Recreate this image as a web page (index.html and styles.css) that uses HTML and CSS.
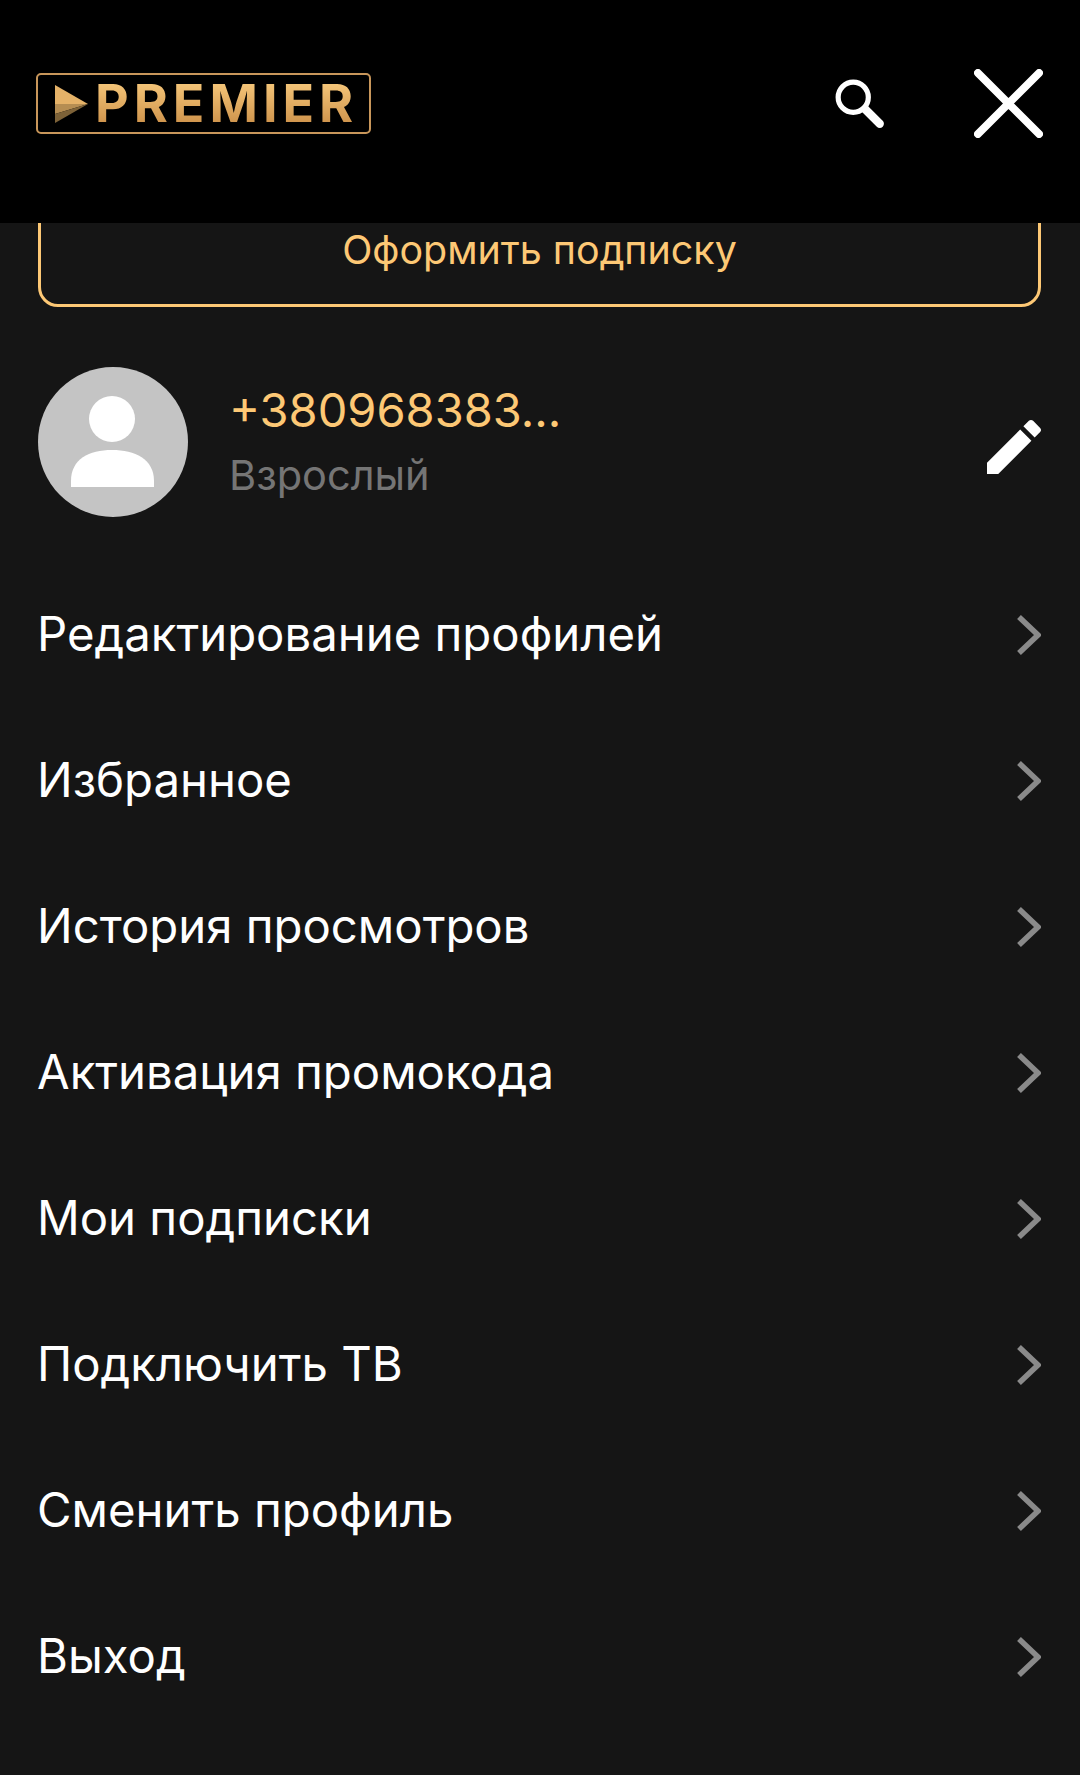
FILE: index.html
```html
<!DOCTYPE html>
<html lang="ru">
<head>
<meta charset="UTF-8">
<meta name="viewport" content="width=device-width, initial-scale=1.0">
<title>Premier</title>
<link rel="stylesheet" href="styles.css">
</head>
<body>

<!-- Top bar -->
<header class="top-bar">
  <div class="logo">
    <svg class="logo-play" viewBox="0 0 33 38">
      <polygon points="0,0 33,19 0,19" fill="#e5b268"/>
      <polygon points="0,19 33,19 0,29" fill="#b58d52"/>
      <polygon points="0,29 33,19 0,38" fill="#7d6238"/>
    </svg>
    <span class="logo-text">PREMIER</span>
  </div>
  <svg class="search-icon" viewBox="0 0 50 50">
    <circle cx="18.5" cy="18.5" r="14.5" fill="none" stroke="#fff" stroke-width="5"/>
    <line x1="30" y1="30" x2="44" y2="44" stroke="#fff" stroke-width="8" stroke-linecap="round"/>
  </svg>
  <svg class="close-icon" viewBox="0 0 70 70">
    <path d="M4 4L66 66M66 4L4 66" fill="none" stroke="#fff" stroke-width="8" stroke-linecap="round"/>
  </svg>
</header>

<main class="menu-page">
  <button class="subscribe-button">Оформить подписку</button>

  <section class="profile">
    <div class="avatar">
      <svg viewBox="0 0 150 150">
        <circle cx="74" cy="52" r="23" fill="#fff"/>
        <path d="M33 120V114C33 92 51 83 74 83S116 92 116 114V120Z" fill="#fff"/>
      </svg>
    </div>
    <div class="profile-info">
      <div class="profile-name">+380968383...</div>
      <div class="profile-type">Взрослый</div>
    </div>
    <svg class="edit-icon" viewBox="0 0 24 24">
      <path fill="#fff" d="M3 17.25V21h3.75L17.81 9.94l-3.75-3.75L3 17.25zM20.71 7.04c.39-.39.39-1.02 0-1.41l-2.34-2.34c-.39-.39-1.02-.39-1.41 0l-1.83 1.83 3.75 3.75 1.83-1.83z"/>
    </svg>
  </section>

  <nav class="menu-list">
    <a class="menu-row">Редактирование профилей<svg class="chevron" viewBox="0 0 24 40"><path d="M2 2L21 20L2 38"/></svg></a>
    <a class="menu-row">Избранное<svg class="chevron" viewBox="0 0 24 40"><path d="M2 2L21 20L2 38"/></svg></a>
    <a class="menu-row">История просмотров<svg class="chevron" viewBox="0 0 24 40"><path d="M2 2L21 20L2 38"/></svg></a>
    <a class="menu-row">Активация промокода<svg class="chevron" viewBox="0 0 24 40"><path d="M2 2L21 20L2 38"/></svg></a>
    <a class="menu-row">Мои подписки<svg class="chevron" viewBox="0 0 24 40"><path d="M2 2L21 20L2 38"/></svg></a>
    <a class="menu-row">Подключить ТВ<svg class="chevron" viewBox="0 0 24 40"><path d="M2 2L21 20L2 38"/></svg></a>
    <a class="menu-row">Сменить профиль<svg class="chevron" viewBox="0 0 24 40"><path d="M2 2L21 20L2 38"/></svg></a>
    <a class="menu-row">Выход<svg class="chevron" viewBox="0 0 24 40"><path d="M2 2L21 20L2 38"/></svg></a>
  </nav>
</main>

</body>
</html>
```

FILE: styles.css
```css
* {
  box-sizing: border-box;
}

body {
  margin: 0;
  height: 1775px;
  overflow: hidden;
  background: #151515;
  color: #fff;
  font-family: "Inter", "Noto Sans", sans-serif;
}

/* Top bar */
.top-bar {
  position: relative;
  z-index: 1;
  display: flex;
  align-items: center;
  height: 223px;
  padding: 0 37px 16px 36px;
  background: #000;
}

.logo {
  display: flex;
  align-items: center;
  gap: 7px;
  width: 335px;
  height: 61px;
  padding-left: 17px;
  border: 2px solid #c8965a;
  border-radius: 5px;
}

.logo-play {
  width: 33px;
  height: 38px;
}

.logo-text {
  font-size: 52px;
  font-weight: 700;
  letter-spacing: 5px;
  line-height: 1;
  background: linear-gradient(#f9cb7e, #c98c45);
  -webkit-background-clip: text;
  background-clip: text;
  color: transparent;
}

.search-icon {
  width: 52px;
  height: 52px;
  margin-left: auto;
  margin-right: 88px;
}

.close-icon {
  width: 69px;
  height: 69px;
}

/* Scrolled content under the bar */
.menu-page {
  padding: 0 39px 0 38px;
}

.subscribe-button {
  display: block;
  width: 100%;
  height: 121px;
  margin-top: -37px;
  padding: 6px 0 0;
  background: none;
  border: 3px solid #fdc875;
  border-radius: 20px;
  color: #fdc875;
  font-family: inherit;
  font-size: 39.4px;
}

/* Profile */
.profile {
  display: flex;
  align-items: center;
  margin-top: 60px;
}

.avatar {
  width: 150px;
  height: 150px;
  flex-shrink: 0;
  border-radius: 50%;
  background: #c4c4c4;
}

.avatar svg {
  display: block;
}

.profile-info {
  margin-left: 41px;
  padding-top: 1px;
}

.profile-name {
  color: #fdc875;
  font-size: 47px;
  line-height: 66px;
}

.profile-type {
  color: #757575;
  font-size: 41.5px;
  line-height: 65px;
}

.edit-icon {
  width: 72px;
  height: 72px;
  margin-left: auto;
  margin-right: -9px;
  margin-top: 10px;
}

/* Menu rows */
.menu-list {
  margin-top: 45px;
  margin-left: -1px;
}

.menu-row {
  display: flex;
  align-items: center;
  justify-content: space-between;
  height: 146px;
  padding-bottom: 4px;
  font-size: 47.3px;
}

.chevron {
  width: 24px;
  height: 40px;
  margin-top: 4px;
  fill: none;
  stroke: #8a8a8a;
  stroke-width: 5.5;
}
```
